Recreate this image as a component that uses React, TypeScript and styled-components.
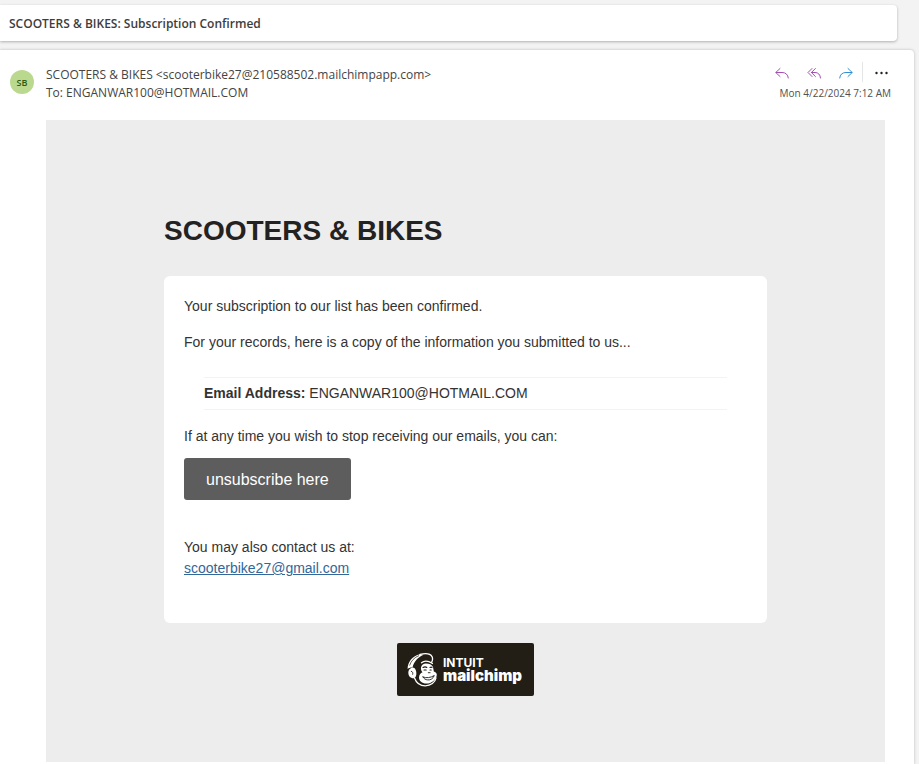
import React from "react";
import styled, { createGlobalStyle } from "styled-components";

const GlobalStyle = createGlobalStyle`
  *, *::before, *::after { box-sizing: border-box; }
  body {
    margin: 0;
    background: #f3f3f3;
    color: #3b3b3b;
    font-family: "Open Sans", "Noto Sans", sans-serif;
  }
  h1, h2, p, ul { margin: 0; padding: 0; }
`;

const Page = styled.div`
  display: flex;
  flex-direction: column;
  gap: 9px;
  min-height: 100vh;
  padding: 5px 5px 0 0;
`;

const SubjectBar = styled.header`
  display: flex;
  align-items: center;
  height: 36px;
  margin-right: 17px;
  padding: 2px 9px 0;
  background: #fff;
  border-radius: 0 4px 4px 0;
  box-shadow: 0 1px 3px rgba(0, 0, 0, 0.28);
`;

const Subject = styled.h1`
  font-size: 12px;
  line-height: 16px;
  font-weight: 600;
  color: #3d3d3d;
`;

const Message = styled.main`
  flex: 1;
  padding: 14px 29px 2px 10px;
  background: #fff;
  border-radius: 0 4px 0 0;
  box-shadow: 0 0 3px rgba(0, 0, 0, 0.25);
`;

const MessageHeader = styled.div`
  display: flex;
  align-items: flex-start;
  gap: 12px;
  height: 56px;
  margin-right: -6px;
`;

const Avatar = styled.div`
  flex: none;
  display: grid;
  place-items: center;
  width: 24px;
  height: 24px;
  margin-top: 6px;
  border-radius: 50%;
  background: #bad98f;
  color: #2d5a10;
  font-size: 9px;
  font-weight: 600;
`;

const Addresses = styled.div`
  flex: 1;
  padding-top: 2px;
  font-size: 12px;
  line-height: 18px;
  color: #444;
  white-space: nowrap;
`;

const HeaderSide = styled.div`
  display: flex;
  flex-direction: column;
  align-items: flex-end;
`;

const Actions = styled.div`
  display: flex;
  align-items: center;
  height: 20px;
  margin-top: -2px;
  gap: 16px;
`;

const ActionButton = styled.button<{ $tone: string }>`
  display: grid;
  place-items: center;
  width: 16px;
  height: 16px;
  padding: 0;
  border: 0;
  background: none;
  color: ${(p) => p.$tone};
`;

const MoreGroup = styled.div`
  display: flex;
  align-items: center;
  height: 20px;
  margin-left: -8px;
  padding: 0 2px 0 10px;
  border-left: 1px solid #e6e6e6;
`;

const Sent = styled.time`
  margin-top: 4px;
  font-size: 10px;
  line-height: 14px;
  color: #505050;
`;

const EmailBody = styled.article`
  margin-left: 36px;
  padding: 91px 20px 66px;
  background: #ededed;
  color: #333;
  font: 14px/21px "Liberation Sans", Arial, sans-serif;
`;

const Column = styled.div`
  max-width: 603px;
  margin: 0 auto;
`;

const ListName = styled.h2`
  margin-bottom: 25px;
  font-size: 28px;
  line-height: 40px;
  font-weight: 700;
  color: #222;
`;

const Card = styled.section`
  padding: 20px 20px 44px;
  background: #fff;
  border-radius: 6px;
`;

const Paragraph = styled.p`
  margin-bottom: 15px;
`;

const Records = styled.ul`
  margin: 24px 20px 16px;
  list-style: none;
`;

const RecordItem = styled.li`
  padding: 5px 0;
  border: solid #f3f3f3;
  border-width: 1px 0;
`;

const Unsubscribe = styled.button`
  display: block;
  height: 42px;
  margin: 11px 0 37px;
  padding: 1px 22px 0;
  border: 0;
  border-radius: 3px;
  background: #5d5d5d;
  color: #fff;
  font: 16px/24px "Liberation Sans", Arial, sans-serif;
`;

const MailLink = styled.a`
  color: #336699;
  text-decoration: underline;
`;

const Badge = styled.a`
  display: flex;
  align-items: center;
  gap: 4px;
  width: 137px;
  height: 53px;
  margin: 20px auto 0;
  padding-left: 10px;
  border-radius: 2px;
  background: #231e15;
  color: #fff;
  text-decoration: none;
  font-family: Inter, sans-serif;
`;

const BadgeWords = styled.span`
  display: flex;
  flex-direction: column;
`;

const Company = styled.span`
  font-size: 12px;
  line-height: 12px;
  font-weight: 700;
`;

const Product = styled.span`
  font-size: 15px;
  line-height: 14px;
  font-weight: 900;
`;

const lineIcon = {
  width: 16,
  height: 16,
  viewBox: "0 0 16 16",
  fill: "none",
  stroke: "currentColor",
  strokeLinecap: "round" as const,
  strokeLinejoin: "round" as const,
};

const ReplyIcon = () => (
  <svg {...lineIcon}>
    <path d="M6 4.500 1.800 8.500 6 12.500M2 8.500h6c3.600 0 6 2 6.300 5.500" />
  </svg>
);

const ReplyAllIcon = () => (
  <svg {...lineIcon}>
    <path d="M6 4.500 2 8.500l4 4M9.400 4.500l-4 4 4 4M5.500 8.500h3.500c3.200 0 5.200 2 5.500 5.500" />
  </svg>
);

const ForwardIcon = () => (
  <svg {...lineIcon}>
    <path d="m10 4.500 4.200 4L10 12.500M14 8.500H8c-3.600 0-6 2-6.300 5.500" />
  </svg>
);

const MoreIcon = () => (
  <svg width="16" height="16" viewBox="0 0 16 16" fill="currentColor">
    <circle cx="3.500" cy="9" r="1.200" />
    <circle cx="8.500" cy="9" r="1.200" />
    <circle cx="13.500" cy="9" r="1.200" />
  </svg>
);

const ChimpLogo = () => (
  <svg width="32" height="34" viewBox="0 0 32 34" aria-hidden="true">
    <path fill="#fff" d="M.6 16C.6 9 5.500 2.800 13 1.200l3.500.5C11 4 7 8.500 5.500 14.500c-1.800-.2-3.600.3-4.900 1.500Z" />
    <g fill="none" stroke="#fff" strokeLinecap="round" strokeLinejoin="round">
      <path strokeWidth="1.300" d="M13 1.400c5.500-1.200 10.500-.5 12 2.200 1 2.200.6 4-.4 5.700" />
      <path strokeWidth="1.200" d="M14.500 9.800C17 7.600 21 7.600 25.500 10.500" />
      <path strokeWidth="1.300" d="M7.500 25c1.700 4.700 5.500 7.800 10.800 7.800 5.500 0 9.800-3.400 10.700-8" />
    </g>
    <path stroke="#231e15" strokeWidth="0.700" fill="none" d="M2.600 12.500C4 8 7.500 4.200 12 2.600" />
    <path
      fill="#fff"
      d="M4.800 14.700c1.500-.4 3 .4 3.800 2 .9 2 1 4.500.4 6.300-.6 1.700-2 2.600-3.600 2.300C3 24.900 1.300 22.600 1.300 19.800c0-2.600 1.400-4.600 3.500-5.100Z"
    />
    <path
      fill="#fff"
      d="M14 14.500c.5-2.500 2.500-4 5-4 3 0 6 1 7 3.500.5 1.500.4 3 .8 4.500 1.600.6 3.200 1.600 3 3.400-.5 4.600-5 8.600-10.500 8.600-4.300 0-7.200-2.500-7.300-6 0-2.400 1.500-4.400 3.500-5.200-1.200-1.300-1.800-3.100-1.500-4.800Z"
    />
    <g fill="none" stroke="#231e15" strokeLinecap="round">
      <path strokeWidth="1.100" d="M16 14.500c1.300-.8 2.800-.8 3.800 0M23 14.500c.7-.5 1.400-.5 2 0M17 17h2.200M23 17h1.200" />
      <path strokeWidth="0.900" d="M16 24c3.300 1.300 7.500.8 11.300-1.500-1.300 3.300-3.900 4.700-6.600 4.400-2.200-.2-3.800-1.100-4.700-2.900Z" />
      <path strokeWidth="0.900" d="M21.300 19.700h1.800M4.300 18.300c1.300.2 1.800 1.500 1.400 3" />
    </g>
  </svg>
);

export default function App() {
  return (
    <>
      <GlobalStyle />
      <Page>
        <SubjectBar>
          <Subject>SCOOTERS &amp; BIKES: Subscription Confirmed</Subject>
        </SubjectBar>
        <Message>
          <MessageHeader>
            <Avatar>SB</Avatar>
            <Addresses>
              <p>SCOOTERS &amp; BIKES &lt;scooterbike27@210588502.mailchimpapp.com&gt;</p>
              <p>To: ENGANWAR100@HOTMAIL.COM</p>
            </Addresses>
            <HeaderSide>
              <Actions>
                <ActionButton $tone="#a24fb0" aria-label="Reply"><ReplyIcon /></ActionButton>
                <ActionButton $tone="#a24fb0" aria-label="Reply all"><ReplyAllIcon /></ActionButton>
                <ActionButton $tone="#2f8fd0" aria-label="Forward"><ForwardIcon /></ActionButton>
                <MoreGroup>
                  <ActionButton $tone="#222" aria-label="More actions"><MoreIcon /></ActionButton>
                </MoreGroup>
              </Actions>
              <Sent dateTime="2024-04-22T07:12">Mon 4/22/2024 7:12 AM</Sent>
            </HeaderSide>
          </MessageHeader>
          <EmailBody>
            <Column>
              <ListName>SCOOTERS &amp; BIKES</ListName>
              <Card>
                <Paragraph>Your subscription to our list has been confirmed.</Paragraph>
                <Paragraph>For your records, here is a copy of the information you submitted to us...</Paragraph>
                <Records>
                  <RecordItem>
                    <strong>Email Address:</strong> ENGANWAR100@HOTMAIL.COM
                  </RecordItem>
                </Records>
                <p>If at any time you wish to stop receiving our emails, you can:</p>
                <Unsubscribe type="button">unsubscribe here</Unsubscribe>
                <p>You may also contact us at:</p>
                <p><MailLink href="mailto:scooterbike27@gmail.com">scooterbike27@gmail.com</MailLink></p>
              </Card>
              <Badge href="#mailchimp">
                <ChimpLogo />
                <BadgeWords>
                  <Company>INTUIT</Company>
                  <Product>mailchimp</Product>
                </BadgeWords>
              </Badge>
            </Column>
          </EmailBody>
        </Message>
      </Page>
    </>
  );
}
